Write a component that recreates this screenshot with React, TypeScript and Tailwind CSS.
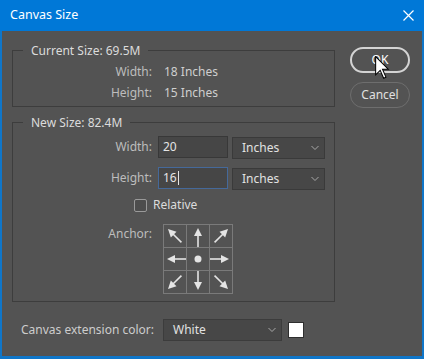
import React from 'react';

const FONT = { fontFamily: '"Noto Sans", "Open Sans", sans-serif' };

type ArrowProps = { tx: number; ty: number; ux: number; uy: number; len?: number };

function Arrow({ tx, ty, ux, uy, len = 19 }: ArrowProps) {
  const h = 8;
  const w = 4;
  const bx = tx - ux * h;
  const by = ty - uy * h;
  const px = -uy;
  const py = ux;
  const tail = { x: tx - ux * len, y: ty - uy * len };
  const pts = `${tx},${ty} ${bx + px * w},${by + py * w} ${bx - px * w},${by - py * w}`;
  return (
    <g>
      <line x1={tail.x} y1={tail.y} x2={bx + ux} y2={by + uy} stroke="#e4e4e4" strokeWidth="1.6" />
      <polygon points={pts} fill="#e4e4e4" />
    </g>
  );
}

function AnchorGrid() {
  const d = 0.7071;
  return (
    <svg width="70" height="70" viewBox="0 0 70 70">
      <rect x="0.5" y="0.5" width="69" height="69" fill="none" stroke="#7a7a7a" />
      <line x1="23.5" y1="0" x2="23.5" y2="70" stroke="#7a7a7a" />
      <line x1="46.5" y1="0" x2="46.5" y2="70" stroke="#7a7a7a" />
      <line x1="0" y1="23.5" x2="70" y2="23.5" stroke="#7a7a7a" />
      <line x1="0" y1="46.5" x2="70" y2="46.5" stroke="#7a7a7a" />
      <Arrow tx={35} ty={4} ux={0} uy={-1} />
      <Arrow tx={35} ty={66} ux={0} uy={1} />
      <Arrow tx={4} ty={35} ux={-1} uy={0} />
      <Arrow tx={66} ty={35} ux={1} uy={0} />
      <Arrow tx={5} ty={5} ux={-d} uy={-d} len={19} />
      <Arrow tx={65} ty={5} ux={d} uy={-d} len={19} />
      <Arrow tx={5} ty={65} ux={-d} uy={d} len={19} />
      <Arrow tx={65} ty={65} ux={d} uy={d} len={19} />
      <circle cx="35" cy="35" r="3.5" fill="#e4e4e4" />
    </svg>
  );
}

function Chevron() {
  return (
    <svg width="8" height="5" viewBox="0 0 8 5" className="absolute right-[5px] top-1/2 -translate-y-1/2">
      <path d="M0.5 0.5 L4 4 L7.5 0.5" fill="none" stroke="#a8a8a8" strokeWidth="1" />
    </svg>
  );
}

function Select({ value, className }: { value: string; className: string }) {
  return (
    <div
      className={`relative flex items-center pl-[9px] bg-[#474747] border border-[#3a3a3a] text-[#e2e2e2] ${className}`}
    >
      {value}
      <Chevron />
    </div>
  );
}

export default function App() {
  return (
    <div className="w-[424px] h-[359px] bg-[#0f76c9] flex flex-col text-[12px]" style={FONT}>
      <div className="h-[31px] flex items-center justify-between pl-[10px] pr-[10px] text-white bg-[#0078d7]">
        <span className="text-[12.5px]">Canvas Size</span>
        <svg width="11" height="11" viewBox="0 0 11 11">
          <path d="M0.5 0.5 L10.5 10.5 M10.5 0.5 L0.5 10.5" stroke="#fff" strokeWidth="1.2" />
        </svg>
      </div>

      <div className="flex-1 mx-[2px] mb-[3px] bg-[#535353] flex text-[#cfcfcf]">
        <div className="w-[323px] ml-[10px] pt-[11px] flex flex-col">
          <fieldset className="border border-[#3d3d3d] h-[65px]">
            <legend className="ml-[10px] px-[8px] leading-[17px] text-[#dcdcdc]">Current Size: 69.5M</legend>
            <div className="grid grid-cols-[139px_auto] gap-x-[12px] leading-[21px] mt-[2px]">
              <span className="text-right text-[#bdbdbd]">Width:</span>
              <span>18 Inches</span>
              <span className="text-right text-[#bdbdbd]">Height:</span>
              <span>15 Inches</span>
            </div>
          </fieldset>

          <fieldset className="border border-[#3d3d3d] mt-[7px] h-[188px]">
            <legend className="ml-[10px] px-[8px] leading-[17px] text-[#dcdcdc]">New Size: 82.4M</legend>
            <div className="flex flex-col mt-[5px]">
              <div className="flex items-center h-[22px]">
                <span className="w-[139px] text-right text-[#bdbdbd]">Width:</span>
                <div className="ml-[6px] w-[70px] h-[22px] bg-[#464646] border border-[#383838] flex items-center pl-[4px] text-[#e4e4e4]">
                  20
                </div>
                <Select value="Inches" className="ml-[4px] w-[93px] h-[22px] mt-[2px]" />
              </div>
              <div className="flex items-center h-[22px] mt-[9px]">
                <span className="w-[139px] text-right text-[#bdbdbd]">Height:</span>
                <div className="ml-[6px] w-[70px] h-[22px] bg-[#464646] border border-[#45699a] flex items-center pl-[4px] text-[#e4e4e4]">
                  16
                  <span className="w-px h-[14px] bg-[#e4e4e4] ml-px" />
                </div>
                <Select value="Inches" className="ml-[4px] w-[93px] h-[22px] mt-[2px]" />
              </div>
              <div className="flex items-center h-[14px] mt-[9px] pl-[121px]">
                <span className="w-[13px] h-[13px] border border-[#9a9a9a] rounded-[2px] bg-[#4d4d4d]" />
                <span className="ml-[6px] text-[#dcdcdc]">Relative</span>
              </div>
              <div className="flex items-start mt-[12px]">
                <span className="w-[139px] text-right text-[#bdbdbd] leading-[17px] mt-[1px]">Anchor:</span>
                <div className="ml-[11px]">
                  <AnchorGrid />
                </div>
              </div>
            </div>
          </fieldset>

          <div className="flex items-center mt-[17px]">
            <span className="ml-[9px] text-[#cdcdcd]">Canvas extension color:</span>
            <Select value="White" className="ml-[9px] w-[119px] h-[22px] border-[#3c3c3c]" />
            <span className="ml-[6px] w-[16px] h-[16px] bg-white border border-[#2e2e2e]" />
          </div>
        </div>

        <div className="ml-[15px] pt-[16px] flex flex-col gap-[9px] w-[60px] relative">
          <div className="h-[26px] rounded-full border-2 border-[#d4d4d4] flex items-center justify-center text-white">
            OK
          </div>
          <div className="h-[26px] rounded-full border border-[#6e6e6e] flex items-center justify-center text-[#e0e0e0]">
            Cancel
          </div>
          <svg
            width="15"
            height="24"
            viewBox="0 0 13 21"
            className="absolute left-[25px] top-[25px]"
          >
            <path d="M0.5 0.5 L0.5 16.5 L4.5 12.5 L7.5 19.5 L9.5 18.5 L6.5 11.5 L11.5 11.5 Z" fill="#fff" stroke="#000" strokeWidth="0.9" />
          </svg>
        </div>
      </div>
    </div>
  );
}
